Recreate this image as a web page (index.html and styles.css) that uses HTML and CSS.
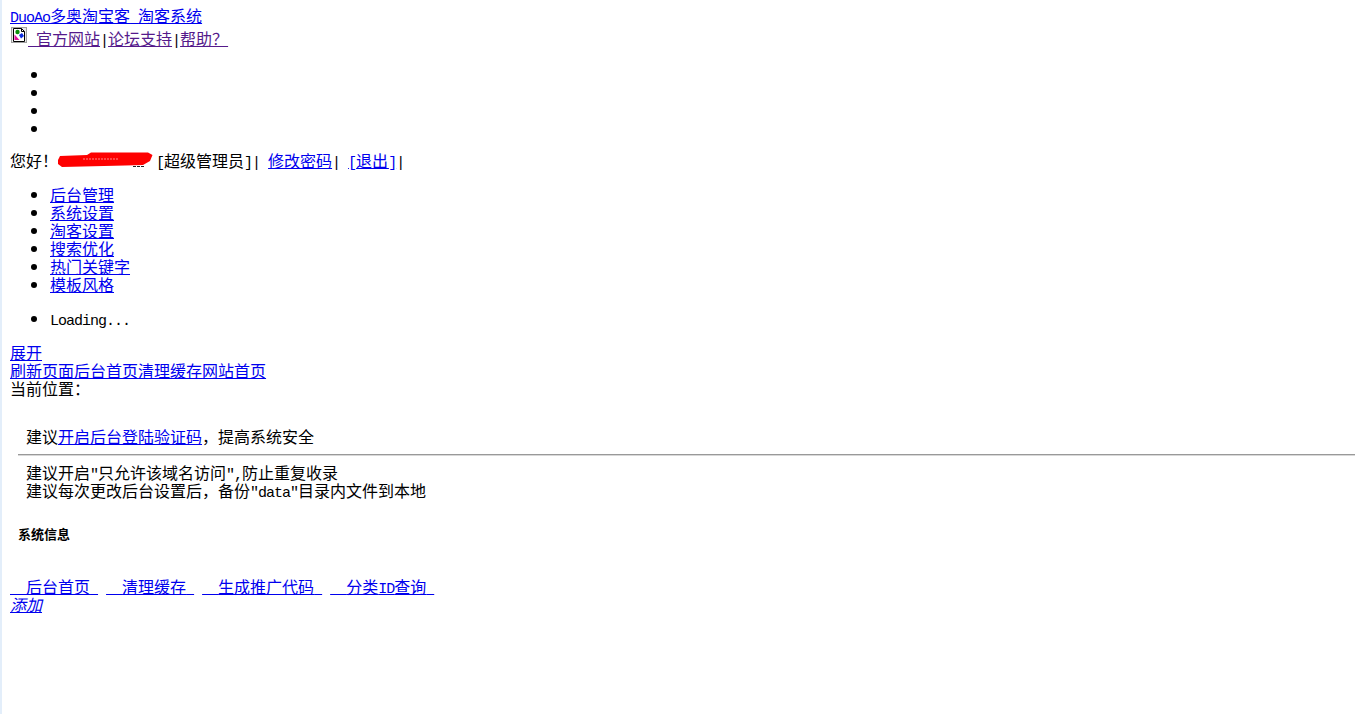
FILE: index.html
```html
<!DOCTYPE html>
<html lang="zh-CN">

<head>
    <meta charset="UTF-8" />
    <title>DuoAo多奥淘宝客 淘客系统</title>
    <link rel="stylesheet" href="styles.css">
</head>

<body>
    <div class="top">
        <div><a href="#"><span class="en">DuoAo</span>多奥淘宝客<span class="en"> </span>淘客系统</a></div>
        <div class="top-links"><svg class="broken-img" width="16" height="16" viewBox="0 0 16 16">
                <rect x="0.5" y="0.5" width="15" height="15" fill="#e8e8e8" stroke="#a0a0a0" />
                <path d="M2.500 1.500h8l3 3v10h-11z" fill="#fff" stroke="#000" />
                <path d="M10.500 1.500v3h3" fill="none" stroke="#000" />
                <circle cx="6.500" cy="5" r="2.200" fill="#0a8f0a" />
                <path d="M3.500 7.500 8.500 13h-5z" fill="#e0109a" />
                <path d="M8 8l3-2 2 3-3 2.500z" fill="#1030e0" />
            </svg><a class="visited" href="#"><span class="en"> </span>官方网站</a><span class="en">|</span><a class="visited" href="#">论坛支持</a><span class="en">|</span><a class="visited" href="#">帮助？</a></div>
    </div>

    <ul class="list empty-list">
        <li></li>
        <li></li>
        <li></li>
        <li></li>
    </ul>

    <div class="user">您好！<svg class="scribble" width="98" height="18" viewBox="0 0 98 18">
            <path d="M75 14.500h12" stroke="#222" stroke-dasharray="3 1" />
            <path d="M0 8 2 4 29 3 33 .5H90L94.500 3 92 9 85 13 67 13.500 4 15 0 12z" fill="#fe0000" />
            <path d="M25 7h35" stroke="#ff8a8a" stroke-dasharray="2 1" />
        </svg><span class="en">[</span>超级管理员<span class="en">]|&#160;</span><a href="#">修改密码</a><span class="en">|&#160;</span><a href="#"><span class="en">[</span>退出<span class="en">]</span></a><span class="en">|</span></div>

    <ul class="list">
        <li><a href="#">后台管理</a></li>
        <li><a href="#">系统设置</a></li>
        <li><a href="#">淘客设置</a></li>
        <li><a href="#">搜索优化</a></li>
        <li><a href="#">热门关键字</a></li>
        <li><a href="#">模板风格</a></li>
    </ul>

    <ul class="list">
        <li><span class="en">Loading...</span></li>
    </ul>

    <div><a href="#">展开</a></div>
    <div><a href="#">刷新页面</a><a href="#">后台首页</a><a href="#">清理缓存</a><a href="#">网站首页</a></div>
    <div>当前位置：</div>

    <div class="notice">
        <p>建议<a href="#">开启后台登陆验证码</a>，提高系统安全</p>
        <hr>
        <p>建议开启<span class="en">"</span>只允许该域名访问<span class="en">",</span>防止重复收录</p>
        <p>建议每次更改后台设置后，备份<span class="en">"data"</span>目录内文件到本地</p>
    </div>

    <h5 class="section-title">系统信息</h5>

    <div class="quick-links">
        <a href="#"><span class="en">  </span>后台首页<span class="en"> </span></a>
        <a href="#"><span class="en">  </span>清理缓存<span class="en"> </span></a>
        <a href="#"><span class="en">  </span>生成推广代码<span class="en"> </span></a>
        <a href="#"><span class="en">  </span>分类<span class="en">ID</span>查询<span class="en"> </span></a>
    </div>
    <div><a class="add" href="#">添加</a></div>
</body>

</html>
```

FILE: styles.css
```css
html {
    background: #fff;
}

body {
    margin: 0;
    padding: 6px 0 0 8px;
    min-height: 708px;
    border-left: 2px solid #e3eefa;
    font-family: "Noto Sans CJK SC", sans-serif;
    font-size: 16px;
    line-height: 18px;
    color: #000;
}

a {
    color: #0000ee;
}

a.visited {
    color: #551a8b;
}

/* latin runs are half the width of the CJK ones */
.en {
    font-family: "Liberation Mono", monospace;
    font-size: 15px;
    letter-spacing: -1px;
    line-height: 0;
    white-space: pre;
}

.top-links {
    height: 23px;
    line-height: 28px;
}

.broken-img {
    vertical-align: top;
    margin: 3px 1px 0;
}

.list {
    margin: 16px 0;
    padding-left: 40px;
}

.empty-list {
    margin: 18px 0 14px;
}

.list li {
    height: 18px;
}

.user {
    height: 18px;
}

.scribble {
    vertical-align: top;
    margin-top: 1px;
}

.notice {
    margin-top: 30px;
}

.notice p {
    margin: 0;
    padding-left: 16px;
}

.notice hr {
    margin: 9px 0 8px 8px;
    border: 0;
    height: 1px;
    background: #999;
    box-shadow: 0 1px 0 #d8d8d8;
}

.section-title {
    margin: 27px 0 0 8px;
    font-size: 13px;
    line-height: 16px;
    font-weight: bold;
}

.quick-links {
    margin-top: 35px;
    display: flex;
    gap: 8px;
}

.add {
    font-style: italic;
}
```
